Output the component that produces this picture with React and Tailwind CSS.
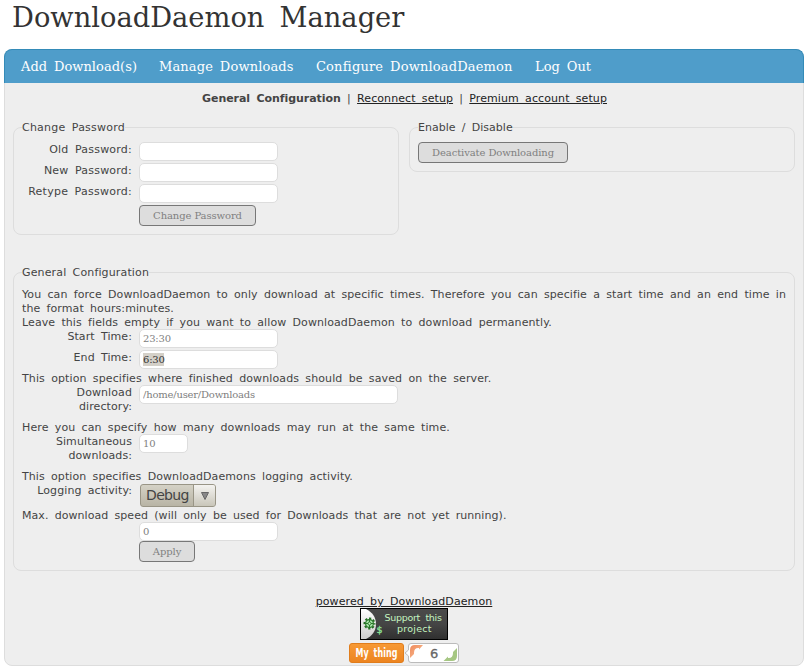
const field =
  "block h-[19px] rounded-[5px] border border-[#ddd] bg-white pl-[3px] pr-1 font-['DejaVu_Serif',serif] text-[10px] leading-[17px] tracking-[-0.2px] text-[#808080] outline-none";

function Field({ value = "", width = "w-[139px]" }) {
  return <input type="text" readOnly value={value} className={`${field} ${width}`} />;
}

function Button({ children, width }) {
  return (
    <button
      className={`block h-[21px] shrink-0 whitespace-nowrap rounded-[4px] border border-[#777] bg-[#ddd] text-center font-['DejaVu_Serif',serif] text-[10px] leading-[18px] tracking-[-0.1px] text-[#808080] [word-spacing:0px] ${width}`}
    >
      {children}
    </button>
  );
}

function Row({ label, height = "h-[21px]", labelClass = "", children }) {
  return (
    <div className={`flex items-start gap-[7px] ${height}`}>
      <label className={`w-[110px] shrink-0 pt-px text-right ${labelClass}`}>{label}</label>
      {children}
    </div>
  );
}

function Group({ title, className, legendClass = "", children }) {
  return (
    <fieldset className={`rounded-[8px] border border-[#ddd] px-2 ${className}`}>
      <legend className={`h-[14px] whitespace-nowrap leading-[16px] ${legendClass}`}>{title}</legend>
      {children}
    </fieldset>
  );
}

function Note({ children, height = "h-[14px]" }) {
  return <p className={`pt-px ${height}`}>{children}</p>;
}

function SupportBadge() {
  return (
    <svg width="88" height="32" viewBox="0 0 88 32" className="block">
      <defs>
        <linearGradient id="dark" x1="0" y1="0" x2="0" y2="1">
          <stop offset="0" stopColor="#4a4a4a" />
          <stop offset="0.5" stopColor="#454545" />
          <stop offset="1" stopColor="#303030" />
        </linearGradient>
        <linearGradient id="disc" x1="0" y1="0" x2="0" y2="1">
          <stop offset="0" stopColor="#fff" />
          <stop offset="1" stopColor="#ccc" />
        </linearGradient>
      </defs>
      <rect width="88" height="32" fill="#000" />
      <rect x="1" y="1" width="86" height="30" fill="url(#dark)" />
      <path d="M1 1h5C12 4 16 9 16 16S12 28 6 31H1z" fill="url(#disc)" />
      <g transform="translate(9.500 15.500)" fill="none">
        <circle r="5" stroke="#237023" strokeWidth="2" strokeDasharray="2.200 1.727" strokeDashoffset="1.100" />
        <circle r="3.900" stroke="#237023" strokeWidth="1.100" fill="#a9e8a9" />
        <path d="M-3.500 0h7M0-3.500v7" stroke="#237023" strokeWidth="0.900" />
        <circle r="1.500" fill="#c8f5c8" stroke="#237023" strokeWidth="0.900" />
      </g>
      <g fill="#c5f5c0" fontFamily="'DejaVu Sans', sans-serif">
        <text x="16.500" y="25" fontSize="9.500" fill="#8fe89a" stroke="#8fe89a" strokeWidth="0.300">$</text>
        <text x="24.500" y="13.300" fontSize="9.500" textLength="57.500">Support this</text>
        <text x="37" y="24.300" fontSize="9.500" textLength="34.500">project</text>
      </g>
    </svg>
  );
}

function FlattrBadge() {
  return (
    <svg width="110" height="20" viewBox="0 0 110 20" className="block">
      <defs>
        <linearGradient id="orange" x1="0" y1="0" x2="0" y2="1">
          <stop offset="0" stopColor="#f79a35" />
          <stop offset="1" stopColor="#ec8420" />
        </linearGradient>
        <linearGradient id="peach" x1="0" y1="0" x2="1" y2="1">
          <stop offset="0" stopColor="#f08a5d" />
          <stop offset="1" stopColor="#f8c193" />
        </linearGradient>
      </defs>
      <rect x="0.500" y="0.500" width="54" height="19" rx="2.500" fill="url(#orange)" stroke="#e07d1c" />
      <text
        x="6.500"
        y="14"
        fontSize="11.500"
        fontWeight="bold"
        fill="#fff"
        fontFamily="'DejaVu Sans Condensed', 'DejaVu Sans', sans-serif"
        textLength="42"
        lengthAdjust="spacingAndGlyphs"
      >
        My thing
      </text>
      <path
        d="M62 .5h45a2.500 2.500 0 0 1 2.500 2.500v14a2.500 2.500 0 0 1-2.500 2.500H62a2.500 2.500 0 0 1-2.500-2.500v-4L56 10l3.500-3V3A2.500 2.500 0 0 1 62 .5z"
        fill="#fff"
        stroke="#bbb"
      />
      <path d="M61 15V7q0-5 5-5h8l-4 4.500V5q-5-.5-5 5v1z" fill="url(#peach)" />
      <path d="M108 5v8q0 5-5 5h-8.500l4.500-4.500V15q5 .5 5-5V9z" fill="#a6c783" />
      <text x="81" y="15" fontSize="13" fill="#666" stroke="#666" strokeWidth="0.300" fontFamily="'DejaVu Sans', sans-serif">6</text>
    </svg>
  );
}

const menu = [
  { label: "Add Download(s)", width: "w-[138px] tracking-[0.04px]" },
  { label: "Manage Downloads", width: "w-[157px] tracking-[0.13px]" },
  { label: "Configure DownloadDaemon", width: "w-[219px] tracking-[0.16px]" },
  { label: "Log Out", width: "w-[80px] tracking-[0.05px]" },
];

export default function App() {
  return (
    <div className="h-[672px] w-[810px] overflow-hidden bg-white pl-1 font-['DejaVu_Sans',sans-serif] text-[11px] leading-[14px] tracking-[0.09px] text-[#444] [word-spacing:2.63px]">
      <h1 className="h-[49px] whitespace-nowrap pl-2 font-['DejaVu_Serif',serif] text-[27.3px] leading-[35px] tracking-normal text-[#333] [word-spacing:6.5px]">
        DownloadDaemon Manager
      </h1>
      <main className="h-[617px] w-[800px] rounded-[8px] border border-[#ddd] bg-[#eee]">
        <nav className="-mx-px -mt-px flex h-[34px] rounded-t-[8px] border border-b-0 border-[#348bb8] bg-[#4f9dca] pl-4 font-['DejaVu_Serif',serif] text-[13px] leading-[34px] text-white">
          {menu.map((m) => (
            <a key={m.label} className={`block whitespace-nowrap ${m.width}`}>
              {m.label}
            </a>
          ))}
        </nav>
        <div className="flex h-[37px] justify-center pt-[9px]">
          <div className="whitespace-nowrap pl-px">
            <b className="tracking-[-0.05px]">General Configuration</b> | <a className="text-[#222] underline">Reconnect setup</a> |{" "}
            <a className="text-[#222] underline">Premium account setup</a>
          </div>
        </div>
        <div className="flex h-[145px] items-start gap-[10px] pl-2">
          <Group title="Change Password" legendClass="tracking-[0.22px]" className="h-[115px] w-[386px]">
            <div className="pt-2">
              <Row labelClass="tracking-[0.22px]" label="Old Password:"><Field /></Row>
              <Row labelClass="tracking-[0.22px]" label="New Password:"><Field /></Row>
              <Row labelClass="tracking-[0.26px]" label="Retype Password:"><Field /></Row>
              <Row label=""><Button width="w-[117px]">Change Password</Button></Row>
            </div>
          </Group>
          <Group title="Enable / Disable" legendClass="tracking-[0.03px]" className="h-[52px] w-[386px]">
            <div className="pt-2">
              <Button width="w-[150px]">Deactivate Downloading</Button>
            </div>
          </Group>
        </div>
        <div className="h-[329px] pl-2">
          <Group title="General Configuration" legendClass="tracking-[0.14px]" className="h-[306px] w-[782px]">
            <div className="whitespace-nowrap pt-2">
              <Note height="h-[42px]">
                You can force DownloadDaemon to only download at specific times. Therefore you can specifie a start time and an end time in
                <br />
                the format hours:minutes.
                <br />
                Leave this fields empty if you want to allow DownloadDaemon to download permanently.
              </Note>
              <Row label="Start Time:"><Field value="23:30" /></Row>
              <Row label="End Time:">
                <div className={`${field} w-[139px]`}>
                  <span className="block h-[13px] w-[21px] translate-y-[2px] bg-[#d4d0c8] leading-[13px] text-[#333]">6:30</span>
                </div>
              </Row>
              <Note>
                <span className="tracking-[0.11px]">This option specifies where finished downloads should be saved on the server.</span>
              </Note>
              <Row height="h-[35px]" label={<>Download<br />directory:</>}>
                <Field value="/home/user/Downloads" width="w-[259px]" />
              </Row>
              <Note>
                <span className="tracking-[0.11px]">Here you can specify how many downloads may run at the same time.</span>
              </Note>
              <Row height="h-[35px]" label={<>Simultaneous<br />downloads:</>}>
                <Field value="10" width="w-[49px]" />
              </Row>
              <Note>This option specifies DownloadDaemons logging activity.</Note>
              <Row height="h-[25px]" label="Logging activity:">
                <div className="ml-px mt-px flex h-[23px] w-[76px] rounded-[3px] border border-[#999586] bg-linear-to-b from-[#d5d2c6] to-[#b8b4a5] text-[14px] leading-[21px] tracking-[-0.65px]">
                  <span className="w-[53px] border-r border-[#999586] pl-[5px]">Debug</span>
                  <span className="flex flex-1 items-center justify-center rounded-r-[2px] bg-linear-to-b from-[#f4f3f0] to-[#c9c6ba]">
                    <svg width="8" height="8" viewBox="0 0 8 8">
                      <path d="M.5.5h7L4 7.500z" fill="#888" stroke="#666" />
                    </svg>
                  </span>
                </div>
              </Row>
              <Note>
                <span className="tracking-[0.06px]">Max. download speed (will only be used for Downloads that are not yet running).</span>
              </Note>
              <Row height="h-[19px]" label=""><Field value="0" /></Row>
              <Row label=""><Button width="w-[56px]">Apply</Button></Row>
            </div>
          </Group>
        </div>
        <footer className="flex flex-col items-center">
          <a className="h-[14px] pt-px text-[#222] underline">powered by DownloadDaemon</a>
          <SupportBadge />
          <div className="mt-[3px]"><FlattrBadge /></div>
        </footer>
      </main>
    </div>
  );
}
